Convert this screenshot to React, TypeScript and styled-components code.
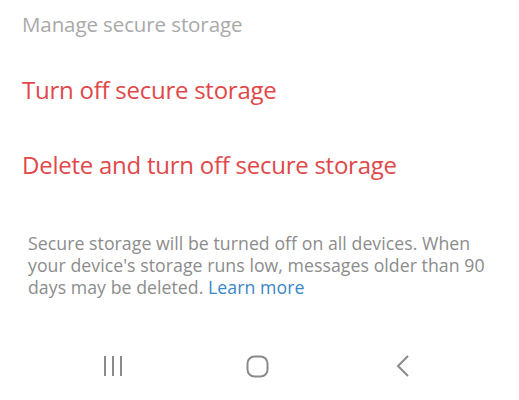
import * as React from 'react';
import styled, { createGlobalStyle } from 'styled-components';

const GlobalStyle = createGlobalStyle`
    html, body {
        margin: 0;
        padding: 0;
        background: #ffffff;
    }
    body {
        font-family: "Open Sans", "Noto Sans", sans-serif;
        width: 519px;
        height: 400px;
        overflow: hidden;
    }
`

const Screen = styled.main`
    display: flex;
    flex-direction: column;
    height: 400px;
    box-sizing: border-box;
`

const Content = styled.section`
    flex: 1;
    display: flex;
    flex-direction: column;
    padding: 8px 22px 0 22px;
`

const SectionTitle = styled.h2`
    margin: 0;
    font-size: 20.5px;
    font-weight: 400;
    line-height: 32px;
    color: #a9a9a9;
    letter-spacing: -0.1px;
`

const ActionItem = styled.button<{$top?: number}>`
    display: block;
    text-align: left;
    background: none;
    border: none;
    padding: 0;
    margin: ${({$top}) => $top ?? 0}px 0 0 0;
    font-family: inherit;
    font-size: 24px;
    font-weight: 400;
    line-height: 34px;
    color: #e0484a;
    cursor: pointer;
    letter-spacing: -0.25px;
`

const Note = styled.p`
    margin: 50px 0 0 6px;
    font-size: 17.7px;
    line-height: 22px;
    color: #8c8c8c;
    letter-spacing: 0.05px;
`

const LearnMore = styled.a`
    color: #3a86c8;
    text-decoration: none;
`

const NavBar = styled.nav`
    height: 56px;
    display: flex;
    align-items: center;
    justify-content: center;
    gap: 101px;
    padding: 0 4px 6px 0;
`

const NavButton = styled.button`
    width: 44px;
    height: 44px;
    display: flex;
    align-items: center;
    justify-content: center;
    background: none;
    border: none;
    padding: 0;
    color: #8a8a8a;
`

export default function App() {
    return (
        <>
            <GlobalStyle />
            <Screen>
                <Content>
                    <SectionTitle>Manage secure storage</SectionTitle>
                    <ActionItem $top={33}>Turn off secure storage</ActionItem>
                    <ActionItem $top={41}>Delete and turn off secure storage</ActionItem>
                    <Note>
                        Secure storage will be turned off on all devices. When your device's storage runs low, messages older than 90 days may be deleted. <LearnMore href="#">Learn more</LearnMore>
                    </Note>
                </Content>
                <NavBar>
                    <NavButton aria-label="Recent apps">
                        <svg width="20" height="22" viewBox="0 0 20 22" fill="none" stroke="currentColor" strokeWidth="2">
                            <line x1="2" y1="1" x2="2" y2="21" />
                            <line x1="10" y1="1" x2="10" y2="21" />
                            <line x1="18" y1="1" x2="18" y2="21" />
                        </svg>
                    </NavButton>
                    <NavButton aria-label="Home">
                        <svg width="23" height="23" viewBox="0 0 23 23" fill="none" stroke="currentColor" strokeWidth="2">
                            <rect x="1.5" y="1.5" width="20" height="20" rx="7" />
                        </svg>
                    </NavButton>
                    <NavButton aria-label="Back">
                        <svg width="14" height="22" viewBox="0 0 14 22" fill="none" stroke="currentColor" strokeWidth="2">
                            <polyline points="12,1 2,11 12,21" />
                        </svg>
                    </NavButton>
                </NavBar>
            </Screen>
        </>
    )
}
